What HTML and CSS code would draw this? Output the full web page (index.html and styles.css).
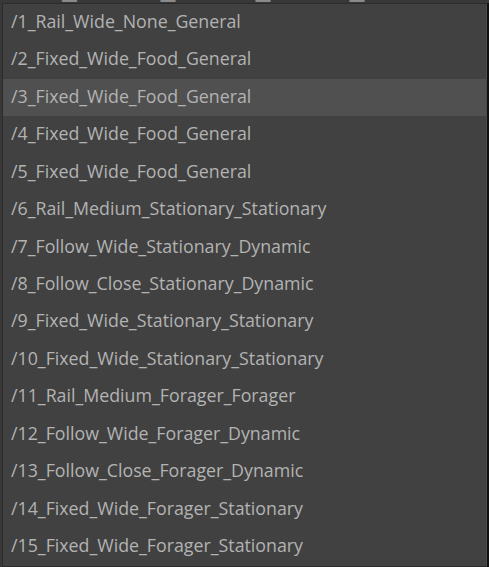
FILE: index.html
```html
<!DOCTYPE html>
<html>
<head>
<meta charset="utf-8">
<link rel="stylesheet" href="styles.css">
</head>
<body>
<div class="backdrop">
  <div class="back-title">/2_Fixed_Wide_Food_General</div>
</div>
<div class="dropdown">
  <div class="item">/1_Rail_Wide_None_General</div>
  <div class="item">/2_Fixed_Wide_Food_General</div>
  <div class="item hover">/3_Fixed_Wide_Food_General</div>
  <div class="item">/4_Fixed_Wide_Food_General</div>
  <div class="item">/5_Fixed_Wide_Food_General</div>
  <div class="item">/6_Rail_Medium_Stationary_Stationary</div>
  <div class="item">/7_Follow_Wide_Stationary_Dynamic</div>
  <div class="item">/8_Follow_Close_Stationary_Dynamic</div>
  <div class="item">/9_Fixed_Wide_Stationary_Stationary</div>
  <div class="item">/10_Fixed_Wide_Stationary_Stationary</div>
  <div class="item">/11_Rail_Medium_Forager_Forager</div>
  <div class="item">/12_Follow_Wide_Forager_Dynamic</div>
  <div class="item">/13_Follow_Close_Forager_Dynamic</div>
  <div class="item">/14_Fixed_Wide_Forager_Stationary</div>
  <div class="item">/15_Fixed_Wide_Forager_Stationary</div>
</div>
</body>
</html>
```
FILE: styles.css
```css
html, body {
  margin: 0;
  padding: 0;
  width: 489px;
  height: 567px;
  overflow: hidden;
  background: #2f2f2f;
}
.backdrop {
  height: 567px;
  background: #383838;
  overflow: hidden;
  position: relative;
}
.back-title {
  font-family: "Open Sans", sans-serif;
  font-size: 34px;
  color: #8a8a8a;
  margin-top: -34px;
  padding-left: 30px;
  line-height: 36px;
  white-space: nowrap;
}
.dropdown {
  position: absolute;
  left: 2px;
  top: 3px;
  width: 483px;
  height: 562px;
  background: #414141;
  border: 1px solid #2b2b2b;
  border-right: 1px solid #4a4a4a;
  box-shadow: 2px 0 0 #111;
  display: flex;
  flex-direction: column;
  box-sizing: content-box;
}
.item {
  height: 37.5px;
  box-sizing: border-box;
  display: flex;
  align-items: center;
  padding-left: 8px;
  padding-bottom: 4px;
  font-family: "Open Sans", sans-serif;
  font-size: 17.8px;
  color: #b3b3b3;
  white-space: nowrap;
}
.item.hover {
  background: #505050;
}
```
